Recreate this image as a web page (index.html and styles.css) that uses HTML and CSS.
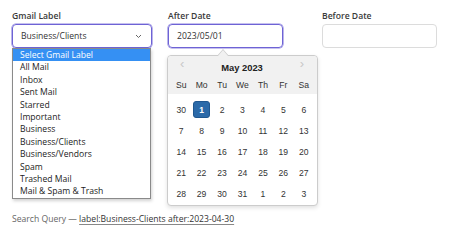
FILE: index.html
```html
<!DOCTYPE html>
<html lang="en">

<head>
  <meta charset="UTF-8">
  <meta name="viewport" content="width=device-width, initial-scale=1.0">
  <title>Gmail Search Builder</title>
  <link rel="stylesheet" href="styles.css">
</head>

<body>
  <div class="search-form">
    <div class="filters">
      <div class="field field-label">
        <label>Gmail Label</label>
        <div class="select-box focused">
          <span>Business/Clients</span>
          <svg width="7" height="5" viewBox="0 0 7 5"><path d="M1 1l2.5 2.5L6 1" fill="none" stroke="#666" stroke-width="1"/></svg>
        </div>
        <ul class="options">
          <li class="selected">Select Gmail Label</li>
          <li>All Mail</li>
          <li>Inbox</li>
          <li>Sent Mail</li>
          <li>Starred</li>
          <li>Important</li>
          <li>Business</li>
          <li>Business/Clients</li>
          <li>Business/Vendors</li>
          <li>Spam</li>
          <li>Trashed Mail</li>
          <li>Mail &amp; Spam &amp; Trash</li>
        </ul>
      </div>
      <div class="field field-after">
        <label>After Date</label>
        <div class="date-input focused">2023/05/01</div>
        <div class="datepicker">
          <div class="dp-head">
            <div class="dp-title">
              <span class="dp-nav">&lsaquo;</span>
              <span class="dp-month">May 2023</span>
              <span class="dp-nav">&rsaquo;</span>
            </div>
            <div class="dp-grid dp-days">
              <span>Su</span><span>Mo</span><span>Tu</span><span>We</span><span>Th</span><span>Fr</span><span>Sa</span>
            </div>
          </div>
          <div class="dp-grid dp-dates">
            <span class="other">30</span><span class="active">1</span><span>2</span><span>3</span><span>4</span><span>5</span><span>6</span>
            <span>7</span><span>8</span><span>9</span><span>10</span><span>11</span><span>12</span><span>13</span>
            <span>14</span><span>15</span><span>16</span><span>17</span><span>18</span><span>19</span><span>20</span>
            <span>21</span><span>22</span><span>23</span><span>24</span><span>25</span><span>26</span><span>27</span>
            <span>28</span><span>29</span><span>30</span><span>31</span><span class="other">1</span><span class="other">2</span><span class="other">3</span>
          </div>
        </div>
      </div>
      <div class="field field-before">
        <label>Before Date</label>
        <div class="date-input"></div>
      </div>
    </div>
    <p class="query">Search Query — <span>label:Business-Clients after:2023-04-30</span></p>
  </div>
</body>

</html>
```

FILE: styles.css
```css
* {
  box-sizing: border-box;
}

body {
  margin: 0;
  font-family: 'Open Sans', 'Noto Sans', sans-serif;
  color: #333;
  background: #fff;
}

.search-form {
  padding: 10px 12px;
}

.filters {
  display: flex;
  gap: 16px;
}

.field {
  position: relative;
  display: flex;
  flex-direction: column;
  gap: 2px;
}

.field-label {
  width: 140px;
}

.field-after {
  width: 138px;
}

.field-before {
  width: 115px;
}

.field>label {
  font-size: 8.6px;
  font-weight: 600;
  line-height: 12px;
  color: #3a3a3a;
}

.select-box,
.date-input {
  height: 24px;
  border: 1px solid #dcdcdc;
  border-radius: 4px;
  padding: 0 8px;
  display: flex;
  align-items: center;
  font-size: 8.6px;
  color: #333;
}

.select-box {
  justify-content: space-between;
  padding-right: 9px;
}

.date-input {
  width: 115px;
}

.focused {
  border-color: #6e63d5;
  box-shadow: 0 0 0 0.6px #8d84e0;
}

.options {
  position: absolute;
  top: 38px;
  left: 0;
  width: 139px;
  margin: 0;
  padding: 0;
  list-style: none;
  background: #fff;
  border: 1px solid #8a8a8a;
  box-shadow: 1px 2px 3px rgba(0, 0, 0, 0.18);
}

.options li {
  height: 12.4px;
  line-height: 12.4px;
  padding-left: 7px;
  font-size: 8.6px;
  color: #222;
}

.options li.selected {
  background: #3590f3;
  color: #fff;
}

.datepicker {
  position: absolute;
  top: 45px;
  left: -1px;
  width: 151px;
  border: 1px solid #ccc;
  border-radius: 4px;
  background: #fff;
  box-shadow: 0 2px 4px rgba(0, 0, 0, 0.12);
  font-family: 'Liberation Sans', Arial, sans-serif;
  padding-bottom: 1px;
}

.datepicker::before,
.datepicker::after {
  content: '';
  position: absolute;
  left: 49px;
  border: 6px solid transparent;
  border-top: 0;
}

.datepicker::before {
  top: -7px;
  border-bottom: 7px solid #ccc;
}

.datepicker::after {
  top: -6px;
  left: 50px;
  border-width: 0 5px 6px;
  border-bottom-color: #f1f1f1;
}

.dp-head {
  background: #f1f1f1;
  border-radius: 4px 4px 0 0;
  padding: 0 3px;
  height: 38px;
}

.dp-title {
  display: flex;
  justify-content: space-between;
  align-items: center;
  height: 22px;
  padding: 0 10px 0 9px;
}

.dp-nav {
  font-size: 13px;
  color: #c8c8c8;
  line-height: 14px;
  margin-top: -6px;
}

.dp-month {
  font-size: 9.4px;
  font-weight: bold;
  color: #222;
}

.dp-grid {
  display: grid;
  grid-template-columns: repeat(7, 1fr);
  text-align: center;
}

.dp-days {
  font-size: 8.6px;
  color: #333;
  line-height: 14px;
}

.dp-dates {
  padding: 5px 3px 0;
  grid-auto-rows: 21px;
  font-size: 8.6px;
  color: #333;
}

.dp-dates span {
  display: flex;
  align-items: center;
  justify-content: center;
}

.dp-dates span.active {
  background: #2b6aa9;
  border: 1px solid #1f5790;
  border-radius: 3px;
  color: #fff;
  font-weight: bold;
  width: 17px;
  height: 17px;
  justify-self: center;
  align-self: center;
}

.query {
  margin: 165px 0 0;
  font-size: 8.6px;
  line-height: 12px;
  color: #666;
}

.query span {
  color: #333;
  text-decoration: underline;
  text-decoration-color: #888;
  text-underline-offset: 2px;
}
```
